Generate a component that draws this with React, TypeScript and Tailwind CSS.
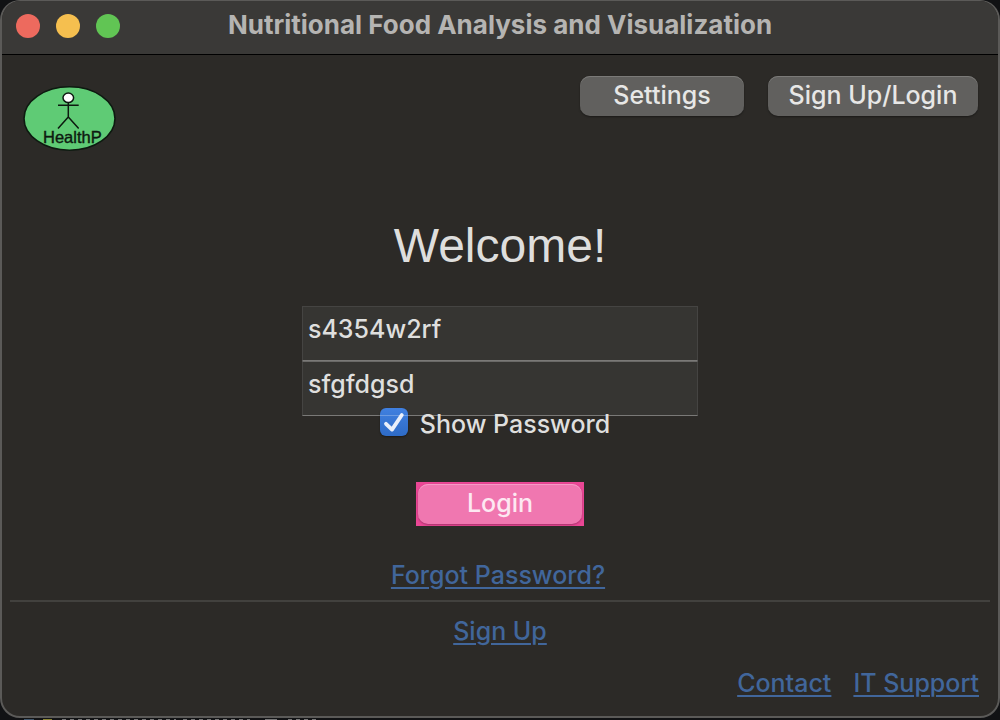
import { useState } from "react";

function Logo() {
  return (
    <svg viewBox="0 0 94 66" className="h-[66px] w-[94px]" role="img" aria-label="HealthP logo">
      <ellipse cx="46.5" cy="32.5" rx="45.5" ry="31.7" fill="#5fcb75" stroke="#0d1a10" strokeWidth="1.6" />
      <g stroke="#0d1a10" strokeWidth="1.5" fill="none">
        <ellipse cx="45.3" cy="11.8" rx="5.3" ry="4.7" fill="#fff" />
        <path d="M45.3 16.5V31M35 19.3H55.7M45.3 31L35 42.5M45.3 31L55.7 42.5" />
      </g>
      <text x="20" y="57" fontFamily="Liberation Sans, sans-serif" fontSize="16.5" fill="#0d1a10" stroke="#0d1a10" strokeWidth="0.4">
        HealthP
      </text>
    </svg>
  );
}

function TitleBar() {
  return (
    <header className="grid h-[54px] grid-cols-[1fr_auto_1fr] items-center border-b border-black bg-[#3a3937] px-3.5 pb-1">
      <div className="flex gap-4">
        <button aria-label="Close" className="size-6 rounded-full bg-[#ed6a5e]" />
        <button aria-label="Minimize" className="size-6 rounded-full bg-[#f5bf4f]" />
        <button aria-label="Zoom" className="size-6 rounded-full bg-[#61c554]" />
      </div>
      <h1 className="pb-0.5 text-[26px] leading-8 font-bold text-[#b5b4b2]">
        Nutritional Food Analysis and Visualization
      </h1>
    </header>
  );
}

const toolButton =
  "h-10 rounded-[10px] bg-[#61605e] pb-0.5 text-center text-[25px] leading-8 font-medium text-[#e7e7e6] shadow-[inset_0_1px_0_#7b7a78,0_1px_2px_#0006]";
const field =
  "w-full border border-[#454442] border-b-[#7a7977] bg-[#363532] px-[5px] pb-[10px] text-[25px] font-medium text-[#dfdfde] outline-none";
const link = "text-[25px] leading-8 font-medium text-[#41669b] underline decoration-2 underline-offset-[3px]";

export default function App() {
  const [user, setUser] = useState("s4354w2rf");
  const [password, setPassword] = useState("sfgfdgsd");
  const [show, setShow] = useState(true);

  return (
    <div className="flex min-h-screen flex-col bg-[#111214] font-['Inter',sans-serif]">
      <div className="flex flex-1 flex-col overflow-hidden rounded-[20px] border-2 border-t border-[#5b5a58] bg-[#2c2a27]">
        <TitleBar />
        <div className="flex items-start justify-between pt-[21px] pr-5 pl-[21px]">
          <div className="pt-[10px]">
            <Logo />
          </div>
          <nav className="flex gap-6">
            <button className={`${toolButton} w-[164px]`}>Settings</button>
            <button className={`${toolButton} w-[210px]`}>Sign Up/Login</button>
          </nav>
        </div>

        <main className="flex flex-col items-center pt-16">
          <h2 className="font-['Liberation_Sans',sans-serif] text-[48px] leading-[60px] text-[#dededd]">
            Welcome!
          </h2>
          <form className="mt-[30px] flex w-full flex-col items-center" onSubmit={(e) => e.preventDefault()}>
            <div className="w-[396px] max-w-full">
              <input
                aria-label="Username"
                className={`${field} block h-[55px]`}
                value={user}
                onChange={(e) => setUser(e.target.value)}
              />
              <input
                aria-label="Password"
                type={show ? "text" : "password"}
                className={`${field} block h-[55px] border-t-[#6a6967]`}
                value={password}
                onChange={(e) => setPassword(e.target.value)}
              />
            </div>
            <label className="relative -mt-2 flex items-center gap-3 pr-[10px] text-[25px] leading-8 font-medium text-[#dfdfde]">
              <span className="relative -mt-1 flex size-7">
                <input
                  type="checkbox"
                  checked={show}
                  onChange={(e) => setShow(e.target.checked)}
                  className="size-7 appearance-none rounded-md bg-[#454442] shadow-[0_1px_2px_#0006] checked:bg-linear-to-b checked:from-[#4080e0] checked:to-[#2e6bc6]"
                />
                {show && (
                  <svg viewBox="0 0 28 28" className="pointer-events-none absolute inset-0" fill="none">
                    <path d="M6 15.8L12 21.6L21.8 7" stroke="#e9effa" strokeWidth="3.8" strokeLinecap="round" strokeLinejoin="round" />
                    <path d="M0 7.5H28" stroke="#fff" strokeOpacity="0.25" />
                  </svg>
                )}
              </span>
              Show Password
            </label>
            <div className="mt-[42px] bg-[#ea4795] p-0.5">
              <button
                type="submit"
                className="block h-10 w-[164px] rounded-[10px] bg-[#f077b0] pb-0.5 text-[25px] leading-8 font-medium text-[#fde8f2] shadow-[inset_0_1px_0_#f59bc5,0_1px_2px_#7a1f4c99]"
              >
                Login
              </button>
            </div>
          </form>
          <a href="#forgot" className={`${link} mt-[33px] pr-1`}>
            Forgot Password?
          </a>
        </main>

        <hr className="mx-2 mt-[9px] border-t-2 border-[#42413e]" />
        <footer className="flex flex-col items-center pt-[13px]">
          <a href="#signup" className={link}>
            Sign Up
          </a>
          <div className="mt-5 flex gap-[22px] self-end pr-[19px]">
            <a href="#contact" className={link}>
              Contact
            </a>
            <a href="#support" className={link}>
              IT Support
            </a>
          </div>
        </footer>
      </div>
      <svg className="mt-px h-px w-[340px]" viewBox="0 0 340 1" aria-hidden="true">
        <path d="M24 .5H34" stroke="#40566b" />
        <path d="M43 .5H52" stroke="#8b8534" />
        <path d="M62 .5H176M183 .5H250M288 .5H316" stroke="#777" strokeDasharray="4 4" />
        <path d="M265 .5H277" stroke="#777" />
      </svg>
    </div>
  );
}
